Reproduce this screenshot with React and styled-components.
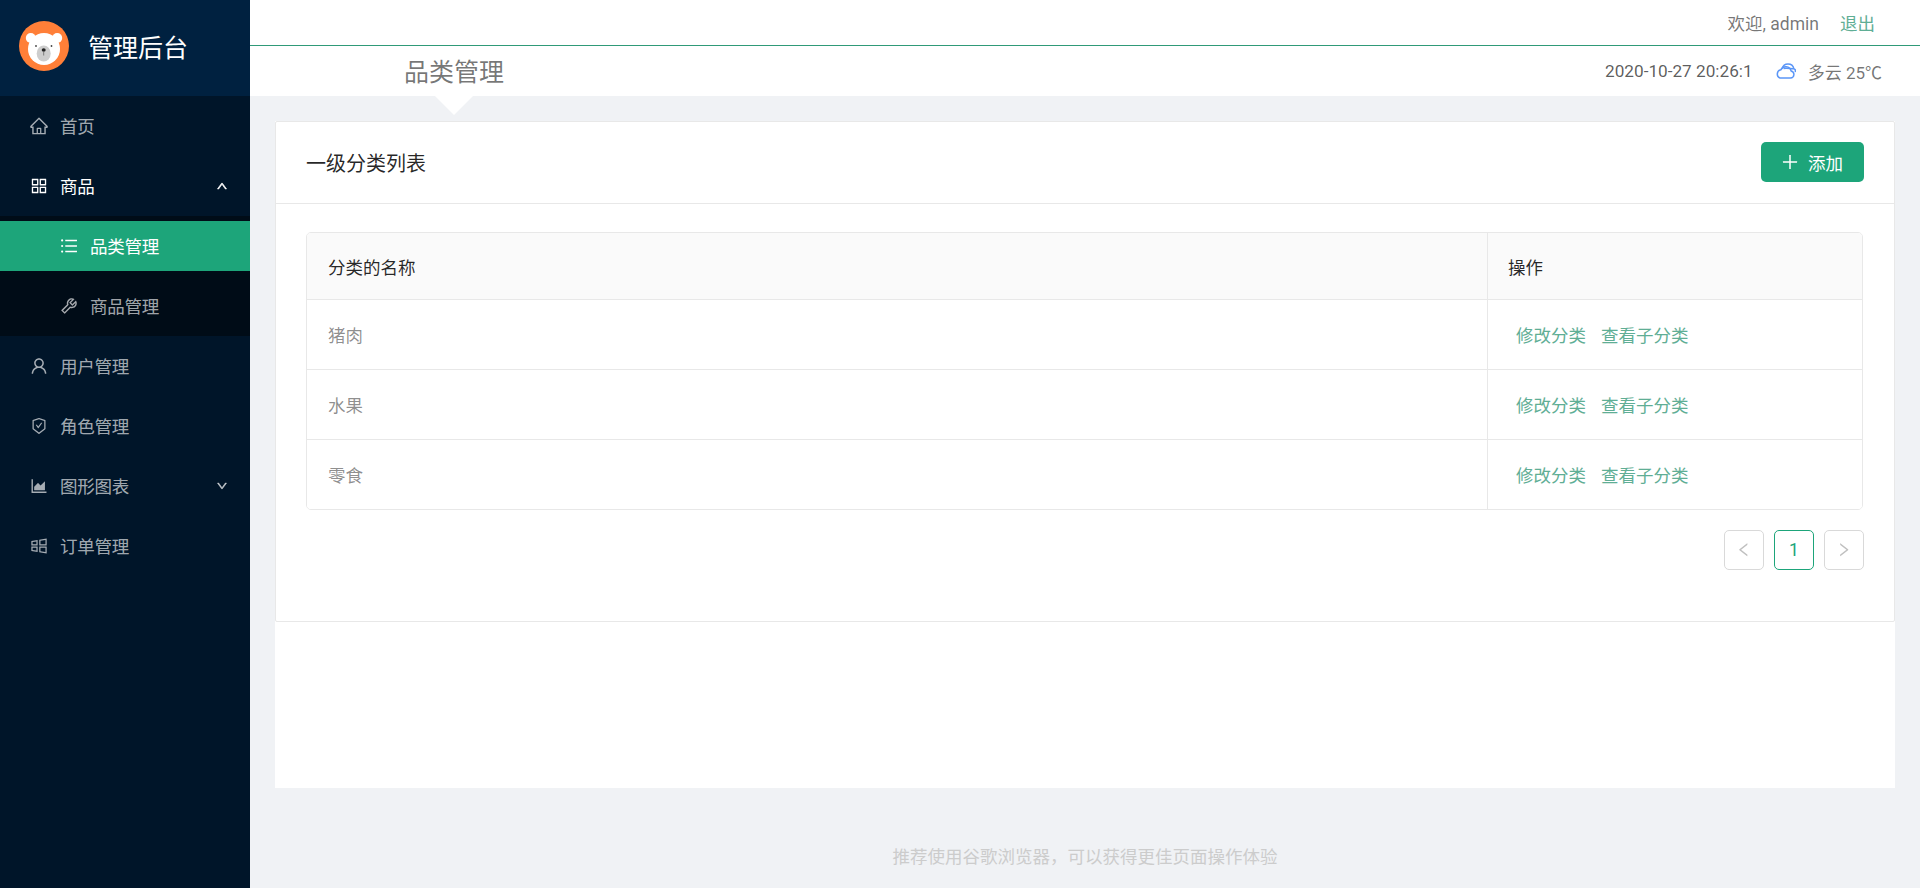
import React from "react";
import styled, { createGlobalStyle } from "styled-components";
import {
  AiOutlineHome, AiOutlineAppstore, AiOutlineBars, AiOutlineTool, AiOutlineUser,
  AiOutlineSafetyCertificate, AiOutlineAreaChart, AiOutlineWindows, AiOutlinePlus,
  AiOutlineLeft, AiOutlineRight, AiOutlineUp, AiOutlineDown,
} from "react-icons/ai";

const Global = createGlobalStyle`
  html, body { margin: 0; padding: 0; height: 100%; }
  body {
    font-family: "Roboto", "Noto Sans CJK SC", sans-serif;
    font-size: 17.5px;
    background: #f0f2f5;
    overflow: hidden;
  }
  * { box-sizing: border-box; }
`;

const Layout = styled.div`display: flex; width: 1920px; height: 888px;`;
const Sider = styled.aside`width: 250px; flex: none; background: #001529; display: flex; flex-direction: column;`;
const LogoBar = styled.div`height: 96px; background: #002140; display: flex; align-items: center; padding: 0 0 4px 19px; gap: 19px;`;
const LogoTitle = styled.h1`margin: 5px 0 0; font-size: 25px; line-height: 1; font-weight: 400; color: #fff;`;
const Menu = styled.nav`display: flex; flex-direction: column;`;
const Item = styled.div`
  height: 50px; margin: 5px 0; display: flex; align-items: center;
  padding-left: ${p => (p.$sub ? 59 : 29)}px; padding-right: 22px;
  color: ${p => (p.$bright ? "#fff" : "rgba(255,255,255,.65)")};
  background: ${p => (p.$active ? "#1da57a" : "transparent")};
  svg { font-size: 20px; flex: none; }
`;
const ShieldIcon = styled(AiOutlineSafetyCertificate)`
  && { font-size: 18px; margin: 0 1px; }
`;
const ItemLabel = styled.span`margin-left: 11px; padding-top: 4px; flex: 1; letter-spacing: -.25px; line-height: 1;`;
const Arrow = styled.span`display: flex; svg { font-size: 12px; stroke: currentColor; stroke-width: 60; }`;
const SubMenu = styled.div`background: #000c17; display: flex; flex-direction: column; height: 120px;`;

const Main = styled.div`flex: 1; display: flex; flex-direction: column; min-width: 0;`;
const Header = styled.header`background: #fff; height: 96px; display: flex; flex-direction: column;`;
const UserRow = styled.div`
  height: 46px; border-bottom: 1px solid #2f9a78; display: flex; align-items: center;
  justify-content: flex-end; padding: 0 45px 1px 0; gap: 21px;
`;
const Welcome = styled.span`color: rgba(0,0,0,.55);`;
const LinkText = styled.a`color: #5fae95;`;
const InfoRow = styled.div`flex: 1; position: relative; display: flex; align-items: center; padding-right: 38px; justify-content: space-between;`;
const PageTitle = styled.div`width: 408px; padding-top: 3px; text-align: center; font-size: 25px; line-height: 1; color: rgba(0,0,0,.55);`;
const Pointer = styled.div`
  position: absolute; left: 185px; top: 50px; width: 0; height: 0;
  border-left: 19px solid transparent; border-right: 19px solid transparent; border-top: 19px solid #fff;
`;
const Weather = styled.div`display: flex; align-items: center; color: rgba(0,0,0,.65);`;
const Clock = styled.span`margin-right: 22px; font-size: 17.2px;`;
const WeatherText = styled.span`margin-left: 12px; font-size: 17px; color: rgba(0,0,0,.55);`;

const Content = styled.main`flex: 1; margin: 25px 25px 0; background: #fff; display: flex; flex-direction: column;`;
const Card = styled.section`height: 501px; border: 1px solid #e8e8e8; border-radius: 2px;`;
const CardHead = styled.div`height: 82px; border-bottom: 1px solid #e8e8e8; padding: 0 30px; display: flex; align-items: center; justify-content: space-between;`;
const CardTitle = styled.div`font-size: 20px; color: rgba(0,0,0,.85);`;
const AddButton = styled.button`
  width: 103px; height: 40px; margin-bottom: 1px; border: none; border-radius: 5px; background: #1da57a; color: #fff;
  font: inherit; font-size: 17.5px; display: flex; align-items: center; justify-content: center; gap: 8px; padding: 0 2px 0 0;
  svg { font-size: 20px; }
`;
const CardBody = styled.div`padding: 28px 0 0 30px;`;
const Table = styled.div`
  width: 1557px; border: 1px solid #e8e8e8; border-radius: 5px; overflow: hidden;
  display: grid; grid-template-columns: 1fr 374px;
`;
const Cell = styled.div`
  height: ${p => (p.$head ? 67 : p.$last ? 69 : 70)}px; display: flex; align-items: center; gap: 15px;
  padding-left: ${p => (p.$head && !p.$left ? 20 : 21)}px;
  background: ${p => (p.$head ? "#fafafa" : "#fff")};
  color: ${p => (p.$head ? "rgba(0,0,0,.85)" : "rgba(0,0,0,.45)")};
  border-bottom: ${p => (p.$last ? "none" : "1px solid #e8e8e8")};
  border-right: ${p => (p.$left ? "1px solid #e8e8e8" : "none")};
`;
const ActionLink = styled.a`color: #5fae95; &:first-child { margin-left: 7px; }`;
const Pager = styled.div`display: flex; justify-content: flex-end; gap: 10px; margin-top: 20px; width: 1558px;`;
const PageBtn = styled.div`
  width: 40px; height: 40px; border-radius: 5px; display: flex; align-items: center; justify-content: center;
  border: 1px solid ${p => (p.$on ? "#1da57a" : "#d9d9d9")};
  color: ${p => (p.$on ? "#1da57a" : "rgba(0,0,0,.25)")};
  svg { font-size: 17.5px; }
`;
const Footer = styled.footer`height: 100px; flex: none; text-align: center; color: #cccccc; font-size: 17.5px; padding-top: 58px; line-height: 22px;`;

const BearLogo = () => (
  <svg width="50" height="50" viewBox="0 0 50 50" style={{ flex: "none" }}>
    <circle cx="25" cy="25" r="25" fill="#ff7f38" />
    <circle cx="11.8" cy="17" r="5" fill="#fff" />
    <circle cx="38.2" cy="17" r="5" fill="#fff" />
    <ellipse cx="25" cy="28" rx="16" ry="16" fill="#fff" />
    <ellipse cx="24.7" cy="32.5" rx="7" ry="8" fill="#cdcdcd" />
    <circle cx="17" cy="25" r=".9" fill="#444" />
    <circle cx="32.5" cy="25" r=".9" fill="#444" />
    <ellipse cx="24.7" cy="29" rx="2" ry="1.7" fill="#222" />
    <path d="M24.7 30v4.5" stroke="#666" strokeWidth=".8" />
  </svg>
);

const CloudIcon = () => (
  <svg width="21" height="16" viewBox="0 0 21 16" fill="none" stroke="#5b96f7" strokeWidth="1.5" style={{ flex: "none" }}>
    <path d="M7 5.8C7.9 2.8 10.3 1 13 1c3 0 5.3 2 5.8 4.6 1.4.6 1.9 2 1.4 3.4" />
    <path d="M8.5 5.4c3.2-.6 7 .2 10.3 .3" />
    <path d="M5 15h10.5a3.6 3.6 0 0 0 .6-7.1A5.5 5.5 0 0 0 5.8 6.8 4.3 4.3 0 0 0 5 15z" />
  </svg>
);

const rows = ["猪肉", "水果", "零食"];

export default function App() {
  return (
    <Layout>
      <Global />
      <Sider>
        <LogoBar>
          <BearLogo />
          <LogoTitle>管理后台</LogoTitle>
        </LogoBar>
        <Menu>
          <Item><AiOutlineHome /><ItemLabel>首页</ItemLabel></Item>
          <Item $bright><AiOutlineAppstore /><ItemLabel>商品</ItemLabel><Arrow><AiOutlineUp /></Arrow></Item>
          <SubMenu>
            <Item $sub $active $bright><AiOutlineBars /><ItemLabel>品类管理</ItemLabel></Item>
            <Item $sub><AiOutlineTool /><ItemLabel>商品管理</ItemLabel></Item>
          </SubMenu>
          <Item><AiOutlineUser /><ItemLabel>用户管理</ItemLabel></Item>
          <Item><ShieldIcon /><ItemLabel>角色管理</ItemLabel></Item>
          <Item><AiOutlineAreaChart /><ItemLabel>图形图表</ItemLabel><Arrow><AiOutlineDown /></Arrow></Item>
          <Item><AiOutlineWindows /><ItemLabel>订单管理</ItemLabel></Item>
        </Menu>
      </Sider>
      <Main>
        <Header>
          <UserRow>
            <Welcome>欢迎, admin</Welcome>
            <LinkText>退出</LinkText>
          </UserRow>
          <InfoRow>
            <PageTitle>品类管理</PageTitle>
            <Pointer />
            <Weather>
              <Clock>2020-10-27 20:26:1</Clock>
              <CloudIcon />
              <WeatherText>多云 25℃</WeatherText>
            </Weather>
          </InfoRow>
        </Header>
        <Content>
          <Card>
            <CardHead>
              <CardTitle>一级分类列表</CardTitle>
              <AddButton><AiOutlinePlus />添加</AddButton>
            </CardHead>
            <CardBody>
              <Table>
                <Cell $head $left>分类的名称</Cell>
                <Cell $head>操作</Cell>
                {rows.map((r, i) => (
                  <React.Fragment key={r}>
                    <Cell $left $last={i === rows.length - 1}>{r}</Cell>
                    <Cell $last={i === rows.length - 1}>
                      <ActionLink>修改分类</ActionLink>
                      <ActionLink>查看子分类</ActionLink>
                    </Cell>
                  </React.Fragment>
                ))}
              </Table>
              <Pager>
                <PageBtn><AiOutlineLeft /></PageBtn>
                <PageBtn $on>1</PageBtn>
                <PageBtn><AiOutlineRight /></PageBtn>
              </Pager>
            </CardBody>
          </Card>
        </Content>
        <Footer>推荐使用谷歌浏览器，可以获得更佳页面操作体验</Footer>
      </Main>
    </Layout>
  );
}
